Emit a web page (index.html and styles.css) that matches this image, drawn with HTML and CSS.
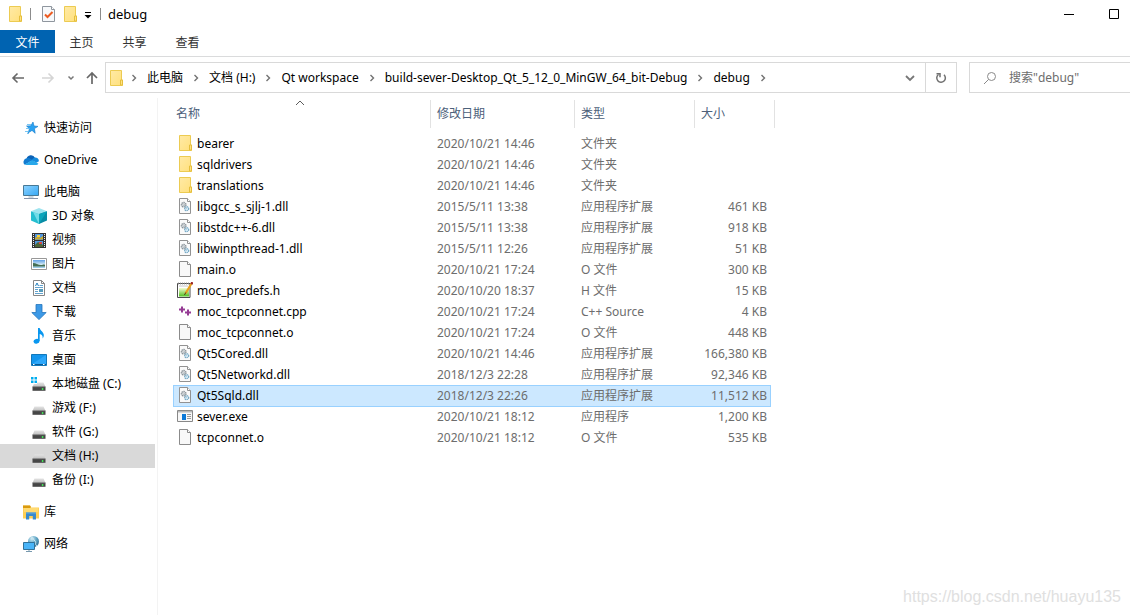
FILE: index.html
```html
<!DOCTYPE html>
<html lang="zh-CN">
<head>
<meta charset="utf-8">
<title>debug</title>
<link rel="stylesheet" href="styles.css">
</head>
<body>
<svg class="sprite" aria-hidden="true">
  <defs>
    <linearGradient id="g-folder" x1="0" y1="0" x2="1" y2="1"><stop offset="0" stop-color="#ffeaa6"/><stop offset="1" stop-color="#ffe07c"/></linearGradient>
    <linearGradient id="g-screen" x1="0" y1="0" x2="1" y2="1"><stop offset="0" stop-color="#8fd3ff"/><stop offset="1" stop-color="#35a8f5"/></linearGradient>
    <linearGradient id="g-drive" x1="0" y1="0" x2="0" y2="1"><stop offset="0" stop-color="#e4e4e4"/><stop offset="1" stop-color="#bdbdbd"/></linearGradient>
    <linearGradient id="g-note" x1="0" y1="0" x2="0" y2="1"><stop offset="0" stop-color="#f4fbd0"/><stop offset="1" stop-color="#50c020"/></linearGradient>
    <linearGradient id="g-sky" x1="0" y1="0" x2="0" y2="1"><stop offset="0" stop-color="#5f9fe6"/><stop offset=".6" stop-color="#d9eef5"/><stop offset="1" stop-color="#8ec5e8"/></linearGradient>
    <radialGradient id="g-globe" cx=".35" cy=".25" r=".8"><stop offset="0" stop-color="#d5edf5"/><stop offset=".5" stop-color="#65a9c8"/><stop offset="1" stop-color="#2b6c93"/></radialGradient>
  </defs>
  <symbol id="folder" viewBox="0 0 16 16"><path d="M1.500.5h11v9.500h1v5.500h-12z" fill="url(#g-folder)" stroke="#eccb52"/><path d="M11.500 15v-5h2v5z" fill="#ffe384" stroke="#e5be3c"/></symbol>
  <symbol id="row-folder" viewBox="0 0 16 16"><path d="M2.500.5h11v9.500h1v5.500h-12z" fill="url(#g-folder)" stroke="#eccb52"/><path d="M12.500 15v-5h2v5z" fill="#ffe384" stroke="#e5be3c"/></symbol>
  <symbol id="page" viewBox="0 0 16 16"><path d="M2.500.5h8l3 3v12h-11z" fill="#f8f8f8" stroke="#8b8b8b"/><path d="M10.500.5v3h3" fill="#fff" stroke="#8b8b8b"/></symbol>
  <symbol id="dll" viewBox="0 0 16 16"><path d="M2.500.5h8l3 3v12h-11z" fill="#fafafa" stroke="#929292"/><path d="M10.500.5v3h3" fill="#fff" stroke="#929292"/><circle cx="6.700" cy="6.700" r="2.300" fill="#d9dde0" stroke="#8b9399" stroke-width="1.300" stroke-dasharray="1.300 .6"/><circle cx="6.700" cy="6.700" r=".8" fill="#fff" stroke="#8b9399" stroke-width=".5"/><circle cx="9.700" cy="10.700" r="2" fill="#d8edf8" stroke="#79aac6" stroke-width="1.300" stroke-dasharray="1.200 .5"/><path d="M7.500 7.500l2 3" stroke="#9bb4c2"/></symbol>
  <symbol id="check" viewBox="0 0 16 16"><path d="M1.500.5h9l3 3v12h-12z" fill="#f7f9fb" stroke="#8f969e"/><path d="M10.500.5v3h3" fill="#fff" stroke="#8f969e"/><path d="M4 8.500l2.500 2.500 5-5" fill="none" stroke="#ec5c22" stroke-width="2"/></symbol>
  <symbol id="header" viewBox="0 0 16 16"><path d="M.5 1.500h12.500v14H.5z" fill="#fff" stroke="#4b4b4b"/><path d="M2 6h10v8.500H2z" fill="url(#g-note)"/><path d="M1.500.5v2M3.500.5v2M5.500.5v2M7.500.5v2M9.500.5v2M11.500.5v2" stroke="#888" stroke-width=".8"/><path d="M2 4h9" stroke="#c8c8c8"/><path d="M14.500 1.500L8.500 11.500" stroke="#e9a01c" stroke-width="2.200"/><path d="M15.500.2l-1.200 2" stroke="#9a2424" stroke-width="2.400"/><path d="M8.800 10.500l-1.300 2.500" stroke="#523b16"/></symbol>
  <symbol id="cpp" viewBox="0 0 16 16"><path d="M2 6.500h6M5 3.500v6M8 9.500h6M11 6.500v6" stroke="#953b94" stroke-width="2"/></symbol>
  <symbol id="exe" viewBox="0 0 16 16"><path d="M.5 2.500h15v11H.5z" fill="#f7f7f7" stroke="#888"/><path d="M1 3h14v1.500H1z" fill="#b9b9b9"/><path d="M5 6h4v6H5z" fill="#0b78d7"/><path d="M10 6.500h4M10 8.500h4M10 10.500h4" stroke="#999"/></symbol>
  <symbol id="star" viewBox="0 0 16 16"><path d="M10 2l1 4 4 .4-3.600 2.200.8 4.700-3.200-2.900-4 2.600 1.500-4.300L3.500 6l4.300-.2z" fill="#2aa2f2" stroke="#1179c9" stroke-width=".6"/><path d="M4 4.500h4M3 8.500h4M2 11.500h4M4 13.500h2" stroke="#58b7f0" stroke-width=".8"/></symbol>
  <symbol id="cloud" viewBox="0 0 16 16"><path d="M3.500 7a4.500 4.500 0 0 1 8.600-1l-2 4z" fill="#0b62b7"/><path d="M3.800 6.300a3.700 3.700 0 0 0-2 6.500l8-4.800-3-1.500c-1-.5-2-.5-3-.2z" fill="#127bd0"/><path d="M11.500 5.500a3.600 3.600 0 0 1 4.400 3.700l-3 1.800-4-3.500z" fill="#168bdc"/><path d="M1.800 12.600L9.200 8l6.300 3.800A3 3 0 0 1 13 13H4a4 4 0 0 1-2.200-.4z" fill="#28a8ea"/></symbol>
  <symbol id="pc" viewBox="0 0 16 16"><path d="M.5 1.500h15v10H.5z" fill="url(#g-screen)" stroke="#477996"/><path d="M5.500 13h5" stroke="#9ab0be"/><path d="M1 14.500h14" stroke="#8796ac"/></symbol>
  <symbol id="cube" viewBox="0 0 16 16"><path d="M0 3.300L8 0l8 3.300L8 6z" fill="#9de4ef"/><path d="M0 3.300L8 6v10l-8-3.500z" fill="#25bed0"/><path d="M8 6l8-2.700v9.200L8 16z" fill="#078ca5"/><path d="M2 4l6 2v10z" fill="#70dce8"/><path d="M8 6l8-2.700L8 16z" fill="#0ba5bb"/></symbol>
  <symbol id="film" viewBox="0 0 16 16"><path d="M1 1h14v15H1z" fill="#333"/><path d="M4 2h8v6H4zM4 9h8v6H4z" fill="#5297df"/><path d="M4 6l3-2 2 2 3-2v3.500H4z" fill="#c7a82f"/><path d="M6 3h3v2H6z" fill="#f6d13b"/><path d="M4 13l3-3 5 3v2H4z" fill="#4f6737"/><path d="M8 10h3v2H8z" fill="#d94b42"/><path d="M2.500 2v13M13.500 2v13" stroke="#eee" stroke-dasharray="1 1"/></symbol>
  <symbol id="picture" viewBox="0 0 16 16"><path d="M.5 2.500h15v11H.5z" fill="#fff" stroke="#989898"/><path d="M2 4h12v8H2z" fill="url(#g-sky)"/><path d="M2 7c3 0 5 2 8 2 2 0 3-1 4 0v1.500H2z" fill="#446f56"/></symbol>
  <symbol id="document" viewBox="0 0 16 16"><path d="M2.500.5h8l3 3v12h-11z" fill="#fff" stroke="#868686"/><path d="M10.500.5v3h3" fill="none" stroke="#868686"/><path d="M4.500 6l1.500-3 1.500 3" fill="none" stroke="#247fbd"/><path d="M8.500 5.500H12M4 7.500h8M4 9.500h3M4 11.500h3M4 13.500h8" stroke="#63a3ce"/><path d="M8 9h4v3H8z" fill="#579bbb"/></symbol>
  <symbol id="download" viewBox="0 0 16 16"><path d="M5 .5h6v8h4.200L8 15.600.8 8.500H5z" fill="#3c99e6" stroke="#2475bb" stroke-width=".8"/></symbol>
  <symbol id="music" viewBox="0 0 16 16"><ellipse cx="5.500" cy="13.300" rx="3" ry="2.400" fill="#0997f0" transform="rotate(-15 5.500 13.300)"/><path d="M7 0h1.700c.3 2.800 4.600 4 4.100 8-.2 1-.5 1.800-1.200 2.500.5-2.500-.8-4-2.900-4.500V13H7z" fill="#0997f0"/></symbol>
  <symbol id="desktop" viewBox="0 0 16 16"><path d="M.5 2.500h15v11H.5z" fill="#1496ed" stroke="#1278ba"/><path d="M1 12L15 3v9z" fill="#2da7fa"/><path d="M1 12.500h14" stroke="#075995"/><path d="M2 12.500h2M12 12.500h2" stroke="#fff" stroke-dasharray="1 .5"/></symbol>
  <symbol id="drive" viewBox="0 0 16 16"><path d="M3.500 6.500h9l2 4.500H1.500z" fill="url(#g-drive)"/><path d="M1.500 10.800h13v4h-13z" fill="#464646"/><path d="M1.500 10.800h13" stroke="#777" stroke-width=".7"/><circle cx="11.600" cy="13" r=".9" fill="#43ef59"/></symbol>
  <symbol id="system" viewBox="0 0 16 16"><use href="#drive"/><path d="M0 1h6v7H0z" fill="#fff"/><path d="M0 1h2.500v2.500H0zM3.500 1H6v2.500H3.500zM0 4.500h2.500V7H0zM3.500 4.500H6V7H3.500z" fill="#00adef"/></symbol>
  <symbol id="library" viewBox="0 0 16 16"><path d="M0 1.500h7l1 2h8v11H0z" fill="#ffcf54"/><path d="M0 1.500h7l1 1.500-1 1H0z" fill="#d99a0f"/><path d="M1 4h14v4H1z" fill="#ffda72"/><path d="M3 8.500h10v7H9.800V12H6.200v3.500H3z" fill="#3989cd"/><path d="M3 8.500h10v1H3z" fill="#61ace3"/></symbol>
  <symbol id="network" viewBox="0 0 16 16"><circle cx="10.500" cy="5.500" r="5.500" fill="url(#g-globe)"/><path d="M8 1c3 0 2 3 4 4s-1 3 2 5" stroke="#cde8f0" fill="none"/><path d="M.5 6.500h11v7H.5z" fill="#49b4f8" stroke="#327198"/><path d="M3 15.500h6M6 14v1" stroke="#7899ae"/></symbol>
  <symbol id="chevron" viewBox="0 0 8 8"><path d="M2.500 1l3 3-3 3" fill="none" stroke="#727272" stroke-width="1.400"/></symbol>
</svg>

<header class="titlebar">
  <svg class="icon"><use href="#folder"/></svg>
  <span class="divider"></span>
  <button class="quick" aria-label="属性"><svg class="icon"><use href="#check"/></svg></button>
  <button class="quick" aria-label="新建文件夹"><svg class="icon"><use href="#folder"/></svg></button>
  <button class="customize" aria-label="自定义快速访问工具栏"><svg width="8" height="8" viewBox="0 0 8 8"><path d="M1 1.500h6" stroke="#000"/><path d="M.5 4h7L4 7.500z"/></svg></button>
  <span class="divider"></span>
  <h1 class="title">debug</h1>
  <div class="window-buttons">
    <button aria-label="最小化"><svg width="12" height="12" viewBox="0 0 12 12"><path d="M1 6.500h10" stroke="#000"/></svg></button>
    <button aria-label="最大化"><svg width="12" height="12" viewBox="0 0 12 12"><path d="M1.500 1.500h9v9h-9z" fill="none" stroke="#000"/></svg></button>
  </div>
</header>

<nav class="tabs">
  <button class="tab tab-file">文件</button>
  <button class="tab">主页</button>
  <button class="tab">共享</button>
  <button class="tab">查看</button>
</nav>

<div class="toolbar">
  <div class="history">
    <button aria-label="后退"><svg width="14" height="14" viewBox="0 0 14 14"><path d="M13 7H2M6.500 2.500L2 7l4.500 4.500" fill="none" stroke="#686868" stroke-width="1.600"/></svg></button>
    <button aria-label="前进" disabled><svg width="14" height="14" viewBox="0 0 14 14"><path d="M1 7h11M7.500 2.500L12 7l-4.500 4.500" fill="none" stroke="#d5d5d5" stroke-width="1.600"/></svg></button>
    <button class="recent" aria-label="最近浏览的位置"><svg width="8" height="8" viewBox="0 0 8 8"><path d="M1.500 2.500L4 5l2.500-2.500" fill="none" stroke="#777" stroke-width="1.500"/></svg></button>
    <button class="up" aria-label="上移"><svg width="14" height="14" viewBox="0 0 14 14"><path d="M7 13V2M2 7l5-5 5 5" fill="none" stroke="#686868" stroke-width="1.700"/></svg></button>
  </div>
  <div class="address">
    <svg class="icon"><use href="#folder"/></svg>
    <ol class="crumbs">
      <li><svg class="chevron"><use href="#chevron"/></svg><a href="#pc">此电脑</a></li>
      <li><svg class="chevron"><use href="#chevron"/></svg><a href="#h">文档 (H:)</a></li>
      <li><svg class="chevron"><use href="#chevron"/></svg><a href="#workspace">Qt workspace</a></li>
      <li><svg class="chevron"><use href="#chevron"/></svg><a href="#build">build-sever-Desktop_Qt_5_12_0_MinGW_64_bit-Debug</a></li>
      <li><svg class="chevron"><use href="#chevron"/></svg><a href="#debug">debug</a></li>
      <li><svg class="chevron"><use href="#chevron"/></svg></li>
    </ol>
    <button class="address-drop" aria-label="以前的位置"><svg width="12" height="12" viewBox="0 0 12 12"><path d="M2 4l4 4 4-4" fill="none" stroke="#777" stroke-width="1.800"/></svg></button>
    <button class="refresh" aria-label="刷新"><svg width="12" height="12" viewBox="0 0 12 12"><path d="M3.500 2.500a4.300 4.300 0 1 0 5.500.3" fill="none" stroke="#707070" stroke-width="1.500"/><path d="M1.500 1.700H5v3.600" fill="none" stroke="#707070" stroke-width="1.500"/></svg></button>
  </div>
  <label class="search">
    <svg width="14" height="14" viewBox="0 0 14 14"><circle cx="8.500" cy="5.500" r="4" fill="none" stroke="#8a8a8a"/><path d="M5.500 8.500L1 13" stroke="#8a8a8a"/></svg>
    <input type="search" aria-label="搜索" placeholder="搜索&quot;debug&quot;">
  </label>
</div>

<div class="body">
  <nav class="sidebar">
    <a class="place root" href="#quick"><svg class="icon"><use href="#star"/></svg>快速访问</a>
    <a class="place root" href="#onedrive"><svg class="icon"><use href="#cloud"/></svg>OneDrive</a>
    <a class="place root" href="#pc"><svg class="icon"><use href="#pc"/></svg>此电脑</a>
    <a class="place" href="#3d"><svg class="icon"><use href="#cube"/></svg>3D 对象</a>
    <a class="place" href="#videos"><svg class="icon"><use href="#film"/></svg>视频</a>
    <a class="place" href="#pictures"><svg class="icon"><use href="#picture"/></svg>图片</a>
    <a class="place" href="#documents"><svg class="icon"><use href="#document"/></svg>文档</a>
    <a class="place" href="#downloads"><svg class="icon"><use href="#download"/></svg>下载</a>
    <a class="place" href="#music"><svg class="icon"><use href="#music"/></svg>音乐</a>
    <a class="place" href="#desktop"><svg class="icon"><use href="#desktop"/></svg>桌面</a>
    <a class="place" href="#c"><svg class="icon"><use href="#system"/></svg>本地磁盘 (C:)</a>
    <a class="place" href="#f"><svg class="icon"><use href="#drive"/></svg>游戏 (F:)</a>
    <a class="place" href="#g"><svg class="icon"><use href="#drive"/></svg>软件 (G:)</a>
    <a class="place current" href="#h"><svg class="icon"><use href="#drive"/></svg>文档 (H:)</a>
    <a class="place" href="#i"><svg class="icon"><use href="#drive"/></svg>备份 (I:)</a>
    <a class="place root" href="#library"><svg class="icon"><use href="#library"/></svg>库</a>
    <a class="place root" href="#network"><svg class="icon"><use href="#network"/></svg>网络</a>
  </nav>

  <main class="content">
    <table class="files">
      <colgroup><col class="col-name"><col class="col-date"><col class="col-type"><col class="col-size"><col class="col-edge"></colgroup>
      <thead>
        <tr><th class="sorted">名称<svg class="sort" width="10" height="6" viewBox="0 0 10 6"><path d="M1 5l4-4 4 4" fill="none" stroke="#5c5c5c"/></svg></th><th>修改日期</th><th>类型</th><th colspan="2">大小</th></tr>
      </thead>
      <tbody>
        <tr><td><span class="file"><svg class="icon"><use href="#row-folder"/></svg>bearer</span></td><td>2020/10/21 14:46</td><td>文件夹</td><td></td></tr>
        <tr><td><span class="file"><svg class="icon"><use href="#row-folder"/></svg>sqldrivers</span></td><td>2020/10/21 14:46</td><td>文件夹</td><td></td></tr>
        <tr><td><span class="file"><svg class="icon"><use href="#row-folder"/></svg>translations</span></td><td>2020/10/21 14:46</td><td>文件夹</td><td></td></tr>
        <tr><td><span class="file"><svg class="icon"><use href="#dll"/></svg>libgcc_s_sjlj-1.dll</span></td><td>2015/5/11 13:38</td><td>应用程序扩展</td><td>461 KB</td></tr>
        <tr><td><span class="file"><svg class="icon"><use href="#dll"/></svg>libstdc++-6.dll</span></td><td>2015/5/11 13:38</td><td>应用程序扩展</td><td>918 KB</td></tr>
        <tr><td><span class="file"><svg class="icon"><use href="#dll"/></svg>libwinpthread-1.dll</span></td><td>2015/5/11 12:26</td><td>应用程序扩展</td><td>51 KB</td></tr>
        <tr><td><span class="file"><svg class="icon"><use href="#page"/></svg>main.o</span></td><td>2020/10/21 17:24</td><td>O 文件</td><td>300 KB</td></tr>
        <tr><td><span class="file"><svg class="icon"><use href="#header"/></svg>moc_predefs.h</span></td><td>2020/10/20 18:37</td><td>H 文件</td><td>15 KB</td></tr>
        <tr><td><span class="file"><svg class="icon"><use href="#cpp"/></svg>moc_tcpconnet.cpp</span></td><td>2020/10/21 17:24</td><td>C++ Source</td><td>4 KB</td></tr>
        <tr><td><span class="file"><svg class="icon"><use href="#page"/></svg>moc_tcpconnet.o</span></td><td>2020/10/21 17:24</td><td>O 文件</td><td>448 KB</td></tr>
        <tr><td><span class="file"><svg class="icon"><use href="#dll"/></svg>Qt5Cored.dll</span></td><td>2020/10/21 14:46</td><td>应用程序扩展</td><td>166,380 KB</td></tr>
        <tr><td><span class="file"><svg class="icon"><use href="#dll"/></svg>Qt5Networkd.dll</span></td><td>2018/12/3 22:28</td><td>应用程序扩展</td><td>92,346 KB</td></tr>
        <tr class="selected"><td><span class="file"><svg class="icon"><use href="#dll"/></svg>Qt5Sqld.dll</span></td><td>2018/12/3 22:26</td><td>应用程序扩展</td><td>11,512 KB</td></tr>
        <tr><td><span class="file"><svg class="icon"><use href="#exe"/></svg>sever.exe</span></td><td>2020/10/21 18:12</td><td>应用程序</td><td>1,200 KB</td></tr>
        <tr><td><span class="file"><svg class="icon"><use href="#page"/></svg>tcpconnet.o</span></td><td>2020/10/21 18:12</td><td>O 文件</td><td>535 KB</td></tr>
      </tbody>
    </table>
  </main>
</div>
<div class="watermark">https://blog.csdn.net/huayu135</div>
</body>
</html>
```
FILE: styles.css
```css
* { box-sizing: border-box; }

body {
  margin: 0;
  min-height: 100vh;
  display: flex;
  flex-direction: column;
  background: #fff;
  color: #000;
  font: 12px/16px "Noto Sans", "Noto Sans CJK SC", sans-serif;
}

button, input {
  margin: 0;
  padding: 0;
  border: 0;
  background: none;
  color: inherit;
  font: inherit;
}

a { color: inherit; text-decoration: none; }
svg { display: block; flex: none; }
.sprite { position: absolute; width: 0; height: 0; }
.icon { width: 16px; height: 16px; }

.titlebar {
  display: flex;
  align-items: center;
  height: 30px;
  padding: 0 0 2px 8px;
}
.divider { width: 1px; height: 12px; background: #8c8c8c; }
.titlebar > .icon + .divider { margin: 0 10px 0 6px; }
.quick { margin-right: 6px; }
.customize { margin: 2px 8px 0 -1px; }
.title { margin: 0 0 0 7px; font-size: 13px; font-weight: 400; }
.window-buttons { display: flex; margin-left: auto; }
.window-buttons button {
  display: flex;
  align-items: center;
  justify-content: center;
  width: 45px;
  height: 28px;
}
.window-buttons button:last-child { margin-right: -6px; }

.tabs {
  display: flex;
  height: 27px;
  border-bottom: 1px solid #dadbdc;
}
.tab { width: 53px; height: 23px; padding-top: 2px; color: #333; }
.tab-file { width: 55px; background: #0063b1; color: #fff; }

.toolbar {
  display: flex;
  align-items: center;
  height: 41px;
}
.history { display: flex; align-items: center; width: 105px; padding-left: 11px; }
.history button + button { margin-left: 16px; }
.history button.recent { margin-left: 12px; }
.history button.up { margin-left: 10px; }

.address {
  display: flex;
  flex: 1;
  align-items: center;
  min-width: 0;
  height: 31px;
  border: 1px solid #d9d9d9;
  padding-left: 3px;
}
.crumbs {
  display: flex;
  flex: 1;
  min-width: 0;
  overflow: hidden;
  margin: 0;
  padding: 0;
  list-style: none;
  white-space: nowrap;
}
.crumbs li { display: flex; align-items: center; }
.chevron { width: 8px; height: 8px; margin: 0 9px; }
.crumbs li:first-child .chevron { margin-left: 5px; }
.address-drop, .refresh {
  display: flex;
  align-items: center;
  justify-content: center;
  width: 31px;
  height: 29px;
}
.refresh { border-left: 1px solid #d9d9d9; }

.search {
  display: flex;
  align-items: center;
  gap: 12px;
  width: 161px;
  height: 31px;
  margin-left: 12px;
  padding-left: 13px;
  border: 1px solid #d9d9d9;
  border-right: 0;
}
.search input { flex: 1; min-width: 0; outline: 0; }
.search input::placeholder { color: #6d6d6d; opacity: 1; }

.body { display: flex; flex: 1; }
.sidebar {
  width: 158px;
  padding: 10px 2px 10px 0;
  border-right: 1px solid #f3f3f3;
}
.place {
  display: flex;
  align-items: center;
  gap: 5px;
  height: 24px;
  padding-left: 31px;
}
.root { margin: 8px 0 0; padding-left: 23px; }
.current { background: #d9d9d9; }

.content { flex: 1; padding-left: 15px; }
.files {
  width: 602px;
  table-layout: fixed;
  border-collapse: separate;
  border-spacing: 0;
  color: #6d6d6d;
}
.col-name { width: 258px; }
.col-date { width: 144px; }
.col-type { width: 120px; }
.col-size { width: 76px; }
.col-edge { width: 4px; }
.files th {
  position: relative;
  height: 30px;
  padding: 2px 3px 0 6px;
  background: linear-gradient(#e2e2e2, #e2e2e2) right bottom / 1px 28px no-repeat;
  color: #4c607a;
  font-weight: 400;
  text-align: left;
}
.files th:first-child { padding-left: 3px; }
.sort { position: absolute; top: 2px; left: 50%; margin-left: -7px; }
.files thead::after { content: ""; display: block; height: 5px; }
.files td { height: 21px; padding: 0 4px 0 6px; white-space: nowrap; }
.files td:first-child { padding-left: 4px; color: #000; }
.files td:nth-child(4) { text-align: right; }
.file { display: flex; align-items: center; gap: 4px; }
.file .icon { margin-bottom: 1px; }

.selected td {
  background: #cce8ff;
  box-shadow: inset 0 1px #99d1ff, 0 1px #99d1ff;
}
.selected td:first-child { box-shadow: inset 1px 1px #99d1ff, 0 1px #99d1ff; }
.selected td:last-child { box-shadow: inset -1px 1px #99d1ff, 0 1px #99d1ff; }

.watermark {
  position: absolute;
  right: 9px;
  bottom: 9px;
  color: #e0e0e0;
  font: 16px/18px "Liberation Sans", sans-serif;
}
```
